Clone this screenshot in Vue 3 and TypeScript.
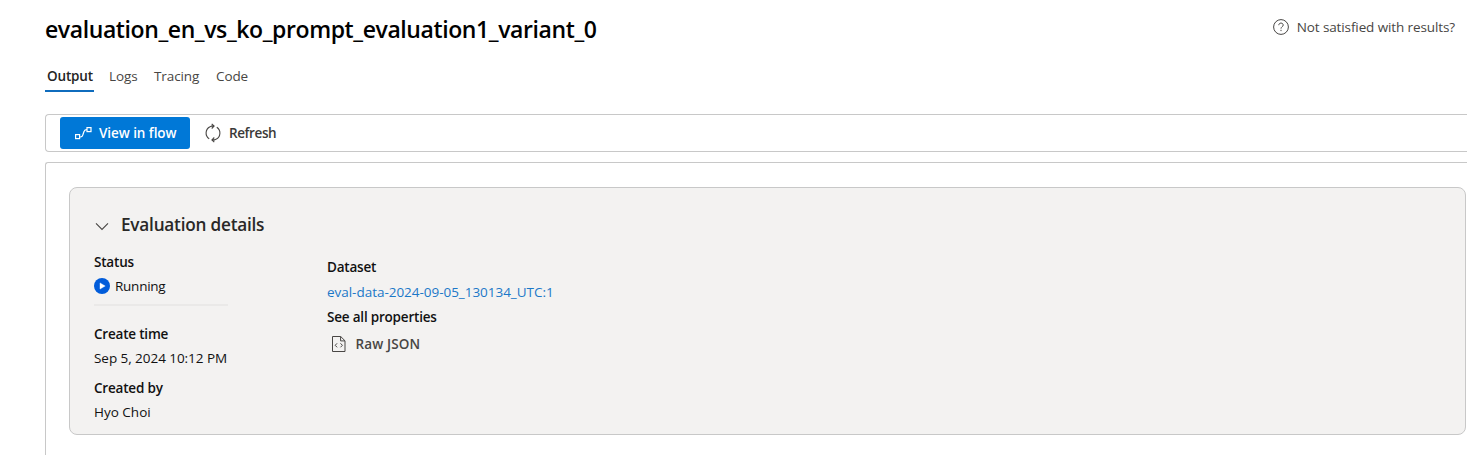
<script setup lang="ts">
interface Tab {
  label: string
  cls: string
}

const tabs: Tab[] = [
  { label: 'Output', cls: 'output' },
  { label: 'Logs', cls: 'logs' },
  { label: 'Tracing', cls: 'tracing' },
  { label: 'Code', cls: 'code' },
]
const activeTab = 'Output'
</script>

<template>
  <main class="page">
    <header class="header">
      <h1 class="title">evaluation_en_vs_ko_prompt_evaluation1_variant_0</h1>
      <div class="feedback">
        <svg width="16" height="16" viewBox="0 0 16 16" fill="none" stroke="#484644">
          <circle cx="8" cy="8" r="7.4" />
          <path d="M5.8 6.2c0-1.3.9-2.1 2.2-2.1s2.2.8 2.2 2c0 1.6-2.2 1.7-2.2 3.5" />
          <path d="M8 10.8v1.3" />
        </svg>
        <span class="feedback-text">Not satisfied with results?</span>
      </div>
    </header>

    <nav class="tabs">
      <a v-for="t in tabs" :key="t.label" class="tab" :class="[t.cls, { active: t.label === activeTab }]"><span>{{ t.label }}</span></a>
    </nav>

    <div class="toolbar">
      <button class="primary">
        <svg width="17" height="14" viewBox="0 0 17 14" fill="none" stroke="#fff" stroke-width="1.2">
          <rect x="0.6" y="8.6" width="4" height="4" />
          <rect x="12" y="1.6" width="4" height="4" />
          <path d="M4.6 11h.8c1.5 0 2.1-.8 2.5-2.2l1-3c.4-1.4 1-2.2 2.4-2.2h.7" />
        </svg>
        <span class="view-text">View in flow</span>
      </button>
      <button class="refresh">
        <svg width="16" height="20" viewBox="0 0 16 20" fill="none" stroke="#484644" stroke-width="1.1">
          <path d="M5 3.7A7 7 0 0 0 4.2 15.8" />
          <path d="M11 16.3A7 7 0 0 0 11.8 4.2" />
          <path d="M6.2 3.1H9M6.7.8L9.1 3.1 6.7 5.5" />
          <path d="M9.8 16.9H7M9.3 14.5L6.9 16.9l2.4 2.3" />
          <path d="M5 3.7l1.7-.6M11 16.3l-1.7.6" />
        </svg>
        <span class="refresh-text">Refresh</span>
      </button>
    </div>

    <section class="panel">
      <div class="card">
        <div class="card-head">
          <svg width="14" height="9" viewBox="0 0 14 9" fill="none" stroke="#484644" stroke-width="1.1">
            <path d="M1 1.4l6 6 6-6" />
          </svg>
          <h2 class="card-title">Evaluation details</h2>
        </div>
        <div class="columns">
          <div class="left">
            <div class="label">Status</div>
            <div class="status">
              <svg width="16" height="16" viewBox="0 0 16 16">
                <circle cx="8" cy="8" r="8" fill="#015cda" />
                <path d="M6 4.9v6.2l5.2-3.1z" fill="#fff" stroke="#fff" stroke-width=".4" stroke-linejoin="round" />
              </svg>
              <span class="running">Running</span>
            </div>
            <div class="rule"></div>
            <div class="label">Create time</div>
            <div class="value date">Sep 5, 2024 10:12 PM</div>
            <div class="label">Created by</div>
            <div class="value">Hyo Choi</div>
          </div>
          <div class="right">
            <div class="label">Dataset</div>
            <a class="link">eval-data-2024-09-05_130134_UTC:1</a>
            <div class="label">See all properties</div>
            <div class="raw">
              <svg width="14" height="16" viewBox="0 0 14 16" fill="none" stroke="#484644">
                <path d="M.5.5h8.2l4.3 4.3v10.7H.5z" />
                <path d="M8.6.5v4.4H13" />
                <path d="M5.1 7.3L3.2 9.3l1.9 2M8.5 7.3l1.9 2-1.9 2" />
              </svg>
              <span class="raw-text">Raw JSON</span>
            </div>
          </div>
        </div>
      </div>
    </section>
  </main>
</template>

<style>
html,
body {
  background: #fff;
  overflow: hidden;
}
</style>

<style scoped>
* {
  box-sizing: border-box;
}
.page {
  width: 1474px;
  height: 455px;
  overflow: hidden;
  background: #fff;
  font: 400 13.5px/20px 'Open Sans', 'Noto Sans', sans-serif;
  color: #111;
  white-space: nowrap;
  padding-left: 45px;
  display: flex;
  flex-direction: column;
}
svg {
  display: block;
  flex: none;
}
.header {
  height: 62px;
  display: flex;
  justify-content: space-between;
  padding-right: 19px;
}
.title {
  margin: 13px 0 0;
  font-size: 23px;
  font-weight: 600;
  line-height: 32px;
  letter-spacing: -0.4px;
  color: #000;
}
.feedback {
  margin-top: 17px;
  height: 20px;
  display: flex;
  align-items: center;
  gap: 8px;
  color: #484644;
}
.feedback-text {
  letter-spacing: -0.11px;
}
.tabs {
  display: flex;
  height: 30px;
  color: #484644;
  letter-spacing: -0.1px;
}
.tab {
  padding: 4px 0 0 2px;
  height: 30px;
}
.output {
  width: 49px;
  margin-right: 13px;
  letter-spacing: -0.15px;
}
.logs {
  width: 45px;
}
.tracing {
  width: 62px;
}
.active {
  border-bottom: 2px solid #0f6cbd;
  font-weight: 600;
  color: #242424;
}
.toolbar {
  width: 1422px;
  height: 38px;
  margin-top: 22px;
  border: 1px solid #c8c8c8;
  border-right: 0;
  border-radius: 4px 0 0 4px;
  display: flex;
  align-items: center;
  padding-left: 14px;
}
button {
  border: 0;
  padding: 0;
  background: none;
  font: inherit;
  font-weight: 600;
  display: flex;
  align-items: center;
}
.primary {
  width: 130px;
  height: 32px;
  padding-left: 15px;
  gap: 7px;
  background: #0078d7;
  color: #fff;
  border-radius: 3px;
}
.view-text {
  letter-spacing: -0.06px;
}
.refresh {
  margin-left: 15px;
  gap: 8px;
  color: #3b3a39;
}
.refresh-text {
  letter-spacing: -0.4px;
}
.panel {
  width: 1422px;
  height: 293px;
  flex: none;
  margin-top: 10px;
  border: solid #c8c8c8;
  border-width: 1px 0 0 1px;
  border-radius: 3px 0 0 0;
  padding: 24px 0 0 23px;
}
.card {
  width: 1397px;
  height: 248px;
  border: 1px solid #c8c8c8;
  border-radius: 8px;
  background: #f3f2f1;
  padding: 24px 0 0 24px;
}
.card-head {
  display: flex;
  align-items: center;
  height: 26px;
  padding-left: 1px;
  gap: 12px;
}
.card-head svg {
  margin-top: 3px;
}
.card-title {
  margin: 0;
  font-size: 17.2px;
  font-weight: 600;
  line-height: 26px;
  letter-spacing: -0.22px;
  color: #292827;
}
.columns {
  display: flex;
}
.left {
  width: 233px;
  padding-top: 14px;
}
.right {
  padding-top: 19px;
}
.label {
  font-weight: 600;
  letter-spacing: -0.2px;
  color: #111;
}
.status {
  display: flex;
  align-items: center;
  gap: 5px;
  margin-top: 4px;
}
.running {
  letter-spacing: -0.25px;
}
.rule {
  width: 134px;
  height: 2px;
  margin: 8px 0 18px;
  background: #eae9e8;
}
.value {
  margin: 4px 0 10px;
}
.date {
  letter-spacing: -0.05px;
}
.link {
  display: block;
  margin: 5px 0;
  letter-spacing: -0.03px;
  color: #1b78c8;
}
.raw {
  display: flex;
  align-items: center;
  gap: 9.5px;
  margin-top: 7px;
  padding-left: 5px;
  font-weight: 600;
  color: #484644;
}
.raw-text {
  letter-spacing: 0.14px;
}
</style>
